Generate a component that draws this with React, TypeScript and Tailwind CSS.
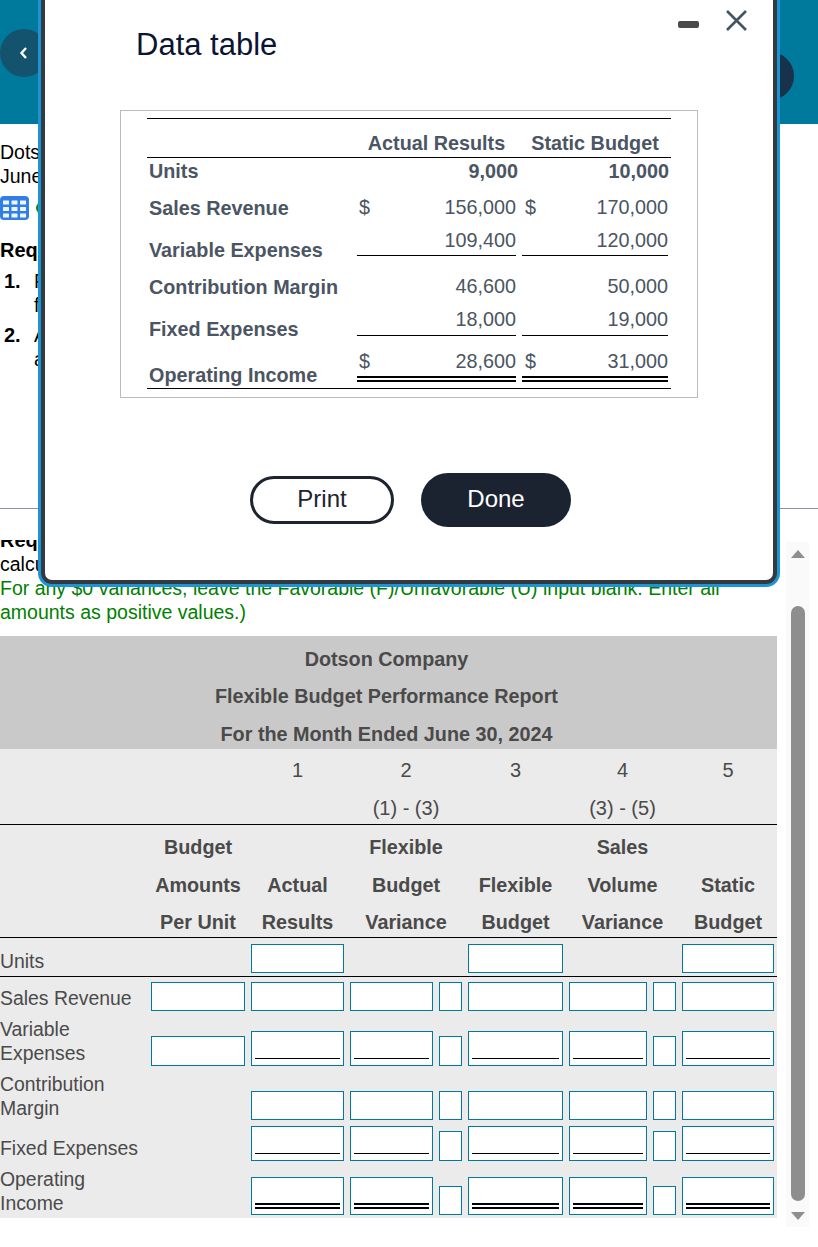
const GRID = "grid grid-cols-[145px_94px_93px_83px_23px_95px_78px_23px_92px] gap-x-[6px]";
const DT = "grid grid-cols-[204px_159px_146px] gap-x-[6px] w-[524px]";

type Kind = "n" | "s" | "d";

function Box({ kind = "n", className = "h-[29px]" }: { kind?: Kind; className?: string }) {
  return (
    <div className={`${className} border border-[#007a9c] bg-white flex items-end ${kind === "d" ? "px-[3px] pb-[5px]" : "px-[3px] pb-[6px]"}`}>
      {kind === "s" && <div className="w-full border-b border-black" />}
      {kind === "d" && <div className="w-full h-[6px] border-b-[6px] border-double border-black" />}
    </div>
  );
}

function ReportRow({
  label,
  h,
  main,
  side,
  budget = false,
  kind = "n",
  labelClass = "",
  mainH,
  sideH,
}: {
  label: string;
  h: string;
  main: boolean;
  side: boolean;
  budget?: boolean;
  kind?: Kind;
  labelClass?: string;
  mainH: string;
  sideH: string;
}) {
  return (
    <div className={`${GRID} ${h} items-end`}>
      <div className={`text-[19.4px] leading-6 ${labelClass}`}>{label}</div>
      {budget ? <Box className={sideH} /> : <div />}
      <Box kind={kind} className={mainH} />
      {main ? <Box kind={kind} className={mainH} /> : <div />}
      {side ? <Box className={sideH} /> : <div />}
      <Box kind={kind} className={mainH} />
      {main ? <Box kind={kind} className={mainH} /> : <div />}
      {side ? <Box className={sideH} /> : <div />}
      <Box kind={kind} className={mainH} />
    </div>
  );
}

function DataRow({
  label,
  a,
  b,
  h,
  labelPt,
  valPt,
  under = "",
  dollar = false,
  bold = false,
}: {
  label: string;
  a: string;
  b: string;
  h: string;
  labelPt: string;
  valPt: string;
  under?: string;
  dollar?: boolean;
  bold?: boolean;
}) {
  const cell = `relative ${h} ${valPt} ${under} flex justify-between text-right leading-6 ${bold ? "font-bold" : ""}`;
  return (
    <div className={`${DT} ${h}`}>
      <div className={`pl-[2px] font-bold leading-6 ${labelPt}`}>{label}</div>
      <div className={`${cell} ${bold ? "-mr-[2px]" : ""}`}>
        <span className="pl-[2px]">{dollar ? "$" : ""}</span>
        <span>{a}</span>
      </div>
      <div className={`${cell} ${bold ? "-mr-px" : ""}`}>
        <span className="pl-[3px]">{dollar ? "$" : ""}</span>
        <span>{b}</span>
      </div>
    </div>
  );
}

export default function App() {
  return (
    <div className="relative w-[818px] h-[1247px] overflow-hidden bg-white text-[20px] text-black font-['Liberation_Sans',Arial,sans-serif]">
      {/* Page header */}
      <div className="h-[124px] bg-[#007a9c]" />
      <div className="absolute left-0 top-[29px] w-[48px] h-[48px] rounded-full bg-[#14536e] flex items-center justify-center text-white">
        <svg width="12" height="14" viewBox="0 0 12 14" fill="none" stroke="currentColor" strokeWidth="2.4">
          <path d="M8 2 L3.5 7 L8 12" />
        </svg>
      </div>
      <div className="absolute left-[746px] top-[52px] w-[48px] h-[48px] rounded-full bg-[#17324a]" />

      {/* Text behind the dialog */}
      <div className="h-[385px] pt-4 text-[19.5px] leading-6 border-b border-[#8b90a8]">
        <div>Dots</div>
        <div>June</div>
        <div className="flex items-center gap-[7px] mt-2 h-6">
          <svg width="29" height="24" viewBox="0 0 29 24">
            <rect width="29" height="24" rx="4" fill="#2f7fe6" />
            <g fill="#f0f5fd">
              <rect x="3" y="4.5" width="6" height="4" rx="0.5" /><rect x="11.5" y="4.5" width="6" height="4" rx="0.5" /><rect x="20" y="4.5" width="6" height="4" rx="0.5" />
              <rect x="3" y="11" width="6" height="4" rx="0.5" /><rect x="11.5" y="11" width="6" height="4" rx="0.5" /><rect x="20" y="11" width="6" height="4" rx="0.5" />
              <rect x="3" y="17.5" width="6" height="4" rx="0.5" /><rect x="11.5" y="17.5" width="6" height="4" rx="0.5" /><rect x="20" y="17.5" width="6" height="4" rx="0.5" />
            </g>
          </svg>
          <div className="w-[12px] h-[12px] rounded-full bg-[#0a8a0a]" />
        </div>
        <div className="mt-[18px] font-bold text-[20px]">Requ</div>
        <div className="mt-[7px] flex"><span className="w-[34px] pl-[4px] font-bold text-[20px]">1.</span><span>F</span></div>
        <div className="pl-[34px]">f</div>
        <div className="mt-[6px] flex"><span className="w-[34px] pl-[4px] font-bold text-[20px]">2.</span><span>A</span></div>
        <div className="pl-[34px]">a</div>
      </div>

      {/* Scroll pane */}
      <div className="mt-[31px] flex items-start">
        <div className="w-[786px] h-[687px] overflow-hidden">
          <div className="-mt-[12px] leading-6 text-[19.5px]">
            <div className="font-bold text-[20px]">Requ</div>
            <div>calcu</div>
            <div className="text-[#008000]">For any $0 variances, leave the Favorable (F)/Unfavorable (U) input blank. Enter all</div>
            <div className="text-[#008000]">amounts as positive values.)</div>
          </div>

          <div className="mt-[12px] w-[777px] text-[#4a4a4a]">
            <div className="h-[113px] bg-[#c9c9c9] pt-[5px] pr-[4px] font-bold text-[19.8px] text-center">
              <div className="h-[37px] leading-[37px]">Dotson Company</div>
              <div className="h-[38px] leading-[37px]">Flexible Budget Performance Report</div>
              <div className="h-[33px] leading-[37px]">For the Month Ended June 30, 2024</div>
            </div>
            <div className="bg-[#ebebeb] h-[469px]">
              <div className={`${GRID} pt-[9px] text-center leading-6 h-[40px]`}>
                <div /><div />
                <div>1</div>
                <div className="col-span-2">2</div>
                <div>3</div>
                <div className="col-span-2">4</div>
                <div>5</div>
              </div>
              <div className={`${GRID} pt-[7px] h-[36px] text-center leading-6 border-b border-black`}>
                <div /><div /><div />
                <div className="col-span-2">(1) - (3)</div>
                <div />
                <div className="col-span-2">(3) - (5)</div>
                <div />
              </div>
              <div className="h-[113px] pt-[10px] font-bold text-[19.8px] text-center leading-6 border-b border-black">
                <div className={`${GRID} h-[38px]`}>
                  <div /><div>Budget</div><div />
                  <div className="col-span-2">Flexible</div>
                  <div />
                  <div className="col-span-2">Sales</div>
                  <div />
                </div>
                <div className={`${GRID} h-[37px]`}>
                  <div /><div>Amounts</div><div>Actual</div>
                  <div className="col-span-2">Budget</div>
                  <div>Flexible</div>
                  <div className="col-span-2">Volume</div>
                  <div>Static</div>
                </div>
                <div className={`${GRID} h-[24px]`}>
                  <div /><div>Per Unit</div><div>Results</div>
                  <div className="col-span-2">Variance</div>
                  <div>Budget</div>
                  <div className="col-span-2">Variance</div>
                  <div>Budget</div>
                </div>
              </div>
              <div className={`${GRID} h-[39px] pt-[6px] border-b border-black items-start`}>
                <div className="text-[19.4px] leading-6 pt-[5px]">Units</div>
                <div />
                <Box />
                <div /><div />
                <Box />
                <div /><div />
                <Box />
              </div>
              <ReportRow label="Sales Revenue" h="h-[34px]" main side budget labelClass="mb-px" mainH="h-[29px]" sideH="h-[29px]" />
              <ReportRow label="Variable Expenses" h="h-[55px]" main side budget kind="s" labelClass="mb-px" mainH="h-[35px]" sideH="h-[30px]" />
              <ReportRow label="Contribution Margin" h="h-[54px]" main side mainH="h-[29px]" sideH="h-[29px]" />
              <ReportRow label="Fixed Expenses" h="h-[41px]" main side kind="s" labelClass="mb-px" mainH="h-[35px]" sideH="h-[30px]" />
              <ReportRow label="Operating Income" h="h-[54px]" main side kind="d" mainH="h-[38px]" sideH="h-[29px]" />
            </div>
          </div>
        </div>

        {/* Scrollbar */}
        <div className="mt-[2px] w-[23px] h-[685px] bg-[#fafafa] flex flex-col items-center">
          <div className="mt-[8px] w-0 h-0 border-x-[7px] border-x-transparent border-b-[8px] border-b-[#8e8e8e]" />
          <div className="mt-[48px] w-[14px] h-[595px] rounded-full bg-[#8e8e8e]" />
          <div className="mt-[11px] w-0 h-0 border-x-[7px] border-x-transparent border-t-[8px] border-t-[#8e8e8e]" />
        </div>
      </div>

      {/* Dialog */}
      <div className="absolute left-[38px] -top-[20px] w-[742px] h-[607px] rounded-[14px] bg-[#1b95d6] p-[3px]">
        <div className="h-full rounded-[11px] border-4 border-[#333a40] bg-white">
          <div className="flex items-start justify-between h-[123px] pl-[91px] pr-[26px]">
            <div className="mt-[38px] text-[31px] leading-10 text-[#0b1533]">Data table</div>
            <div className="flex items-start gap-[27px] mt-[23px]">
              <div className="mt-[11px] w-[21px] h-[7px] rounded-[2px] bg-[#4a4a4a]" />
              <svg width="21" height="21" viewBox="0 0 21 21" fill="none" stroke="#425466" strokeWidth="2.6">
                <path d="M1 1 L20 20 M20 1 L1 20" />
              </svg>
            </div>
          </div>

          <div className="ml-[75px] w-[578px] h-[288px] border border-[#bbbbbb] pl-[26px] pt-[7px] text-[19.8px] text-[#4b5563]">
            <div className="w-[524px] border-t border-black" />
            <div className={`${DT} h-[39px] border-b border-black font-bold leading-6 text-center pt-[12px]`}>
              <div />
              <div>Actual Results</div>
              <div>Static Budget</div>
            </div>
            <DataRow label="Units" a="9,000" b="10,000" h="h-[32px]" labelPt="pt-[1px]" valPt="pt-[1px]" bold />
            <DataRow label="Sales Revenue" a="156,000" b="170,000" h="h-[34px]" labelPt="pt-[6px]" valPt="pt-[5px]" dollar />
            <DataRow label="Variable Expenses" a="109,400" b="120,000" h="h-[32px]" labelPt="pt-[14px]" valPt="pt-[4px]" under="border-b border-black" />
            <DataRow label="Contribution Margin" a="46,600" b="50,000" h="h-[47px]" labelPt="pt-[19px]" valPt="pt-[18px]" />
            <DataRow label="Fixed Expenses" a="18,000" b="19,000" h="h-[33px]" labelPt="pt-[14px]" valPt="pt-[4px]" under="border-b border-black" />
            <div className={`${DT} h-[53px] border-b border-black`}>
              <div className="pl-[2px] pt-[27px] font-bold leading-6">Operating Income</div>
              <div className="h-[46px] pt-[13px] border-b-[6px] border-double border-black flex justify-between leading-6">
                <span className="pl-[2px]">$</span><span>28,600</span>
              </div>
              <div className="h-[46px] pt-[13px] border-b-[6px] border-double border-black flex justify-between leading-6">
                <span className="pl-[3px]">$</span><span>31,000</span>
              </div>
            </div>
          </div>

          <div className="mt-[75px] pl-[3px] flex items-center justify-center gap-[27px] text-[24px]">
            <div className="w-[144px] h-[48px] pb-[3px] rounded-full border-[3px] border-[#1e2330] text-[#1e2330] flex items-center justify-center">Print</div>
            <div className="w-[150px] h-[54px] pb-[3px] rounded-full bg-[#1b2330] text-white flex items-center justify-center">Done</div>
          </div>
        </div>
      </div>
    </div>
  );
}
